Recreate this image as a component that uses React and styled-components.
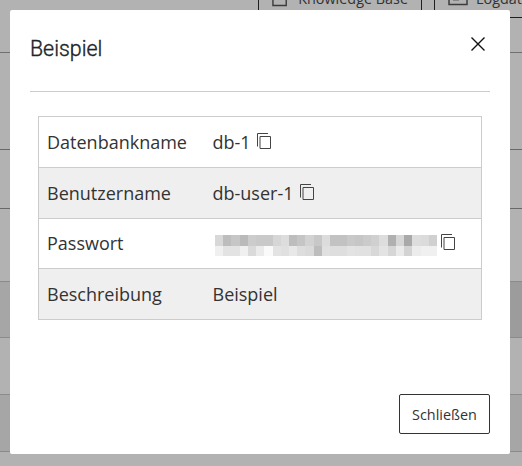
import React from 'react'
import styled, { createGlobalStyle } from 'styled-components'

const GlobalStyle = createGlobalStyle`
    * {
        box-sizing: border-box;
    }
    body {
        margin: 0;
        overflow: hidden;
        background: #b2b2b2;
        font-family: "Open Sans", "Noto Sans", sans-serif;
        color: #333;
    }
`

const passwordTop = [
    '#d8d8d8', '#bdbdbd', '#c6c6c6', '#bababa', '#cccccc', '#c9c9c9', '#c9c9c9', '#d6d6d6', '#dddddd',
    '#bdbdbd', '#c5c5c5', '#d2d2d2', '#c8c8c8', '#dcdcdc', '#c2c2c2', '#c2c2c2', '#c9c9c9', '#c6c6c6',
    '#cbcbcb', '#d0d0d0', '#dddddd', '#b0b0b0', '#d6d6d6', '#a9a9a9', '#dddddd', '#dbdbdb', '#d0d0d0',
]
const passwordBottom = [
    '#f0f0f0', '#e3e3e3', '#e3e3e3', '#f0f0f0', '#dadada', '#ebebeb', '#fafafa', '#e3e3e3', '#e0e0e0',
    '#e8e8e8', '#dddddd', '#dadada', '#bdbdbd', '#e0e0e0', '#dedede', '#dedede', '#e3e3e3', '#e1e1e1',
    '#e1e1e1', '#d8d8d8', '#e3e3e3', '#d6d6d6', '#eaeaea', '#d3d3d3', '#ececec', '#f0f0f0', '#f0f0f0',
]

function CopyIcon() {
    return (
        <CopySvg viewBox="0 0 14 17" fill="none" stroke="#444" strokeWidth="1">
            <path d="M0.5 13.5V0.5H11" />
            <path d="M3 3.5H13.5V15.5H3Z" />
        </CopySvg>
    )
}

function HiddenPassword() {
    return (
        <Mosaic>
            {passwordTop.map((color, i) => <Cell key={'t' + i} $color={color} />)}
            {passwordBottom.map((color, i) => <Cell key={'b' + i} $color={color} />)}
        </Mosaic>
    )
}

export default function App() {
    return (
        <Page>
            <GlobalStyle />
            <Toolbar>
                <ToolButton $width={164} $gap={11}>
                    <svg width="16" height="20" viewBox="0 0 16 20" fill="none" stroke="#3c3c3c" strokeWidth="1.5">
                        <path d="M1 1H15V19H1Z" />
                    </svg>
                    <span>Knowledge Base</span>
                </ToolButton>
                <ToolButton $width={140} $gap={8}>
                    <svg width="20" height="18" viewBox="0 0 20 18" fill="none" stroke="#3c3c3c" strokeWidth="1.5">
                        <path d="M1 1H19V16.5H1Z" />
                        <path d="M5 12H11" stroke="#777" />
                    </svg>
                    <span>Logdateien</span>
                </ToolButton>
            </Toolbar>
            <Stripe $height={35} $line="#707070" />
            <Stripe $height={97} $line="#686868" />
            <Stripe $height={59} $line="#686868" />
            <Stripe $height={73} $line="#8b8b8b" />
            <Stripe $height={56} $line="#8b8b8b" $from="#a6a6a6" $to="#9c9c9c" />
            <Stripe $height={57} $line="#8b8b8b" />
            <Stripe $height={57} $line="#8b8b8b" $from="#a6a6a6" $to="#a6a6a6" />

            <Overlay>
                <Dialog>
                    <Header>
                        <Title>Beispiel</Title>
                        <CloseButton aria-label="Schließen">
                            <svg width="14" height="14" viewBox="0 0 14 14" stroke="#111" strokeWidth="1.4">
                                <path d="M0.5 0.5L13.5 13.5M13.5 0.5L0.5 13.5" />
                            </svg>
                        </CloseButton>
                    </Header>
                    <Details>
                        <Row>
                            <Label>Datenbankname</Label>
                            <Value>db-1<CopyIcon /></Value>
                        </Row>
                        <Row $shaded>
                            <Label>Benutzername</Label>
                            <Value>db-user-1<CopyIcon /></Value>
                        </Row>
                        <Row $height={50}>
                            <Label $lift={2}>Passwort</Label>
                            <Value><HiddenPassword /><CopyIcon /></Value>
                        </Row>
                        <Row $shaded>
                            <Label>Beschreibung</Label>
                            <Value>Beispiel</Value>
                        </Row>
                    </Details>
                    <Footer>
                        <Button>Schließen</Button>
                    </Footer>
                </Dialog>
            </Overlay>
        </Page>
    )
}

const Page = styled.div`
    position: relative;
    width: 522px;
    height: 466px;
    overflow: hidden;
`
const Toolbar = styled.div`
    display: flex;
    align-items: flex-end;
    gap: 12px;
    height: 18px;
    padding-left: 258px;
`
const ToolButton = styled.div`
    display: flex;
    align-items: center;
    flex: none;
    gap: ${props => props.$gap}px;
    width: ${props => props.$width}px;
    height: 40px;
    padding: 0 13px 2px;
    border: 1px solid #1d1f22;
    border-radius: 1px;
    font-size: 14.4px;
    white-space: nowrap;
    span {
        padding-top: 2px;
    }
`
const Stripe = styled.div`
    height: ${props => props.$height}px;
    border-bottom: 1px solid ${props => props.$line};
    background: linear-gradient(to right, ${props => props.$from || 'transparent'} 50%, ${props => props.$to || 'transparent'} 50%);
`
const Overlay = styled.div`
    position: absolute;
    inset: 0;
    padding: 10px 12px 12px 10px;
`
const Dialog = styled.div`
    display: flex;
    flex-direction: column;
    width: 500px;
    height: 444px;
    padding: 0 20px 20px;
    border-radius: 2px;
    background: #fff;
`
const Header = styled.div`
    display: flex;
    justify-content: space-between;
    height: 82px;
    padding: 24px 5px 0 0;
    border-bottom: 1px solid #ccc;
`
const Title = styled.h2`
    margin: 0;
    font-family: Roboto, sans-serif;
    font-size: 22.5px;
    font-weight: 300;
    line-height: 29px;
    color: #212529;
    -webkit-text-stroke: 0.4px #212529;
    transform: scaleX(0.95);
    transform-origin: left;
`
const CloseButton = styled.button`
    display: flex;
    width: 14px;
    height: 14px;
    margin-top: 3px;
    padding: 0;
    border: 0;
    background: none;
`
const Details = styled.div`
    margin: 24px 8px 0;
    border: 1px solid #ccc;
    border-bottom: 0;
`
const Row = styled.div`
    display: flex;
    align-items: center;
    height: ${props => props.$height || 51}px;
    padding-left: 8px;
    border-bottom: 1px solid #ccc;
    background: ${props => props.$shaded ? '#efefef' : '#fff'};
    font-size: 18px;
    line-height: 24px;
`
const Label = styled.div`
    width: 165.5px;
    padding-bottom: ${props => props.$lift || 0}px;
`
const Value = styled.div`
    display: flex;
    align-items: center;
`
const CopySvg = styled.svg`
    width: 14px;
    height: 17px;
    margin: 0 0 2px 6.5px;
`
const Mosaic = styled.div`
    display: grid;
    grid-template-columns: repeat(27, 1fr);
    grid-template-rows: 11px 10px;
    width: 222px;
    margin: 4px -2.5px 0 2.5px;
`
const Cell = styled.span`
    background: ${props => props.$color};
`
const Footer = styled.div`
    display: flex;
    justify-content: flex-end;
    margin-top: auto;
`
const Button = styled.button`
    width: 91px;
    height: 40px;
    padding: 0;
    border: 1px solid #333;
    border-radius: 2px;
    background: #fff;
    color: #333;
    font-family: inherit;
    font-size: 14.4px;
`
